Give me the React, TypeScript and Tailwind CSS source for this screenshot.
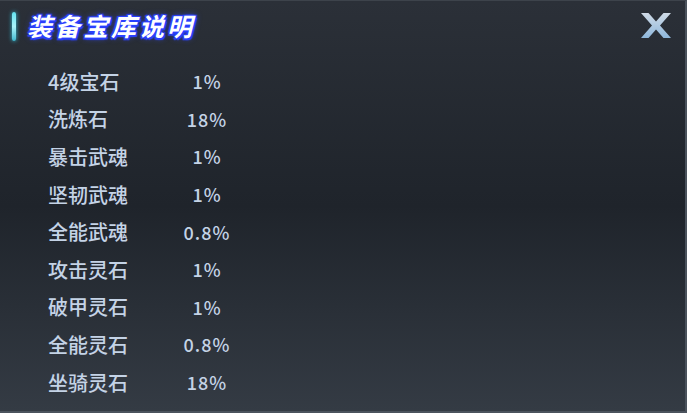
const rows: [string, string][] = [
  ["4级宝石", "1%"],
  ["洗炼石", "18%"],
  ["暴击武魂", "1%"],
  ["坚韧武魂", "1%"],
  ["全能武魂", "0.8%"],
  ["攻击灵石", "1%"],
  ["破甲灵石", "1%"],
  ["全能灵石", "0.8%"],
  ["坐骑灵石", "18%"],
];

function CloseIcon() {
  return (
    <svg width="34" height="27" viewBox="0 0 34 27">
      <defs>
        <linearGradient id="xg" x1="0" y1="0" x2="0" y2="1">
          <stop offset="0" stopColor="#cfdae6" />
          <stop offset="1" stopColor="#8fb8dc" />
        </linearGradient>
      </defs>
      <path
        d="M2 1h7.5l7.5 8.5L24.5 1H32L21 13.5 32 26h-7.5L17 17.5 9.5 26H2l11-12.5z"
        fill="url(#xg)"
      />
    </svg>
  );
}

export default function App() {
  return (
    <div
      className="relative w-[687px] h-[413px] overflow-hidden bg-gradient-to-b from-[#2b3038] via-[#1f242b] to-[#343b44] border-t border-[#3d434b] border-r-2 border-r-[#4a525c] border-b-2 border-b-[#4b535d]"
      style={{ fontFamily: '"Noto Sans CJK SC", "Noto Sans", sans-serif' }}
    >
      {/* Header */}
      <div className="flex items-center h-[50px] pl-[12px]">
        <div className="w-[4px] h-[29px] rounded-full bg-gradient-to-b from-[#5fe3f0] via-[#a8f4fa] to-[#3cb9d0] shadow-[0_0_4px_#36c7e0]" />
        <h1
          className="ml-[11px] -mt-[1px] text-[25px] font-bold italic tracking-[3px] text-white"
          style={{
            textShadow:
              "0 0 1px #2b40ff, 1.5px 1.5px 1px #2b40ff, -1.5px -1.5px 1px #2b40ff, 1.5px -1.5px 1px #2b40ff, -1.5px 1.5px 1px #2b40ff, 0 0 6px #3a4cf0",
          }}
        >
          装备宝库说明
        </h1>
        <div className="ml-auto mr-[12px] -mt-[2px]">
          <CloseIcon />
        </div>
      </div>

      {/* Drop rates */}
      <div className="flex flex-col pt-[12px] pl-[48px]">
        {rows.map(([name, rate]) => (
          <div key={name} className="flex items-center h-[37.6px] text-[#c4d3e6]">
            <span className="w-[119px] text-[20px] font-medium">{name}</span>
            <span className="w-[80px] text-center text-[18px] font-medium tracking-[1px]">{rate}</span>
          </div>
        ))}
      </div>
    </div>
  );
}
